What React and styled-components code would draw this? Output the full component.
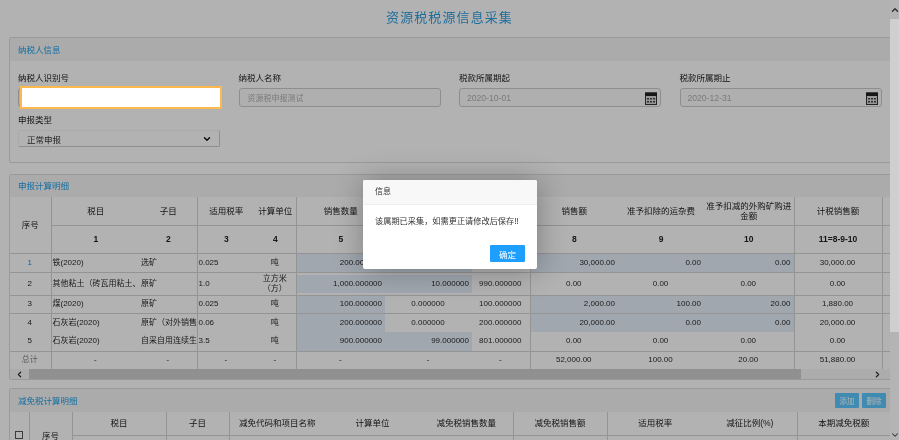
import React from 'react';
import styled, { createGlobalStyle } from 'styled-components';
import { ChevronDown, ChevronLeft, ChevronRight, ChevronUp } from 'lucide-react';

const GlobalStyle = createGlobalStyle`
  html, body {
    margin: 0;
    height: 440px;
    overflow: hidden;
    background: #fff;
    font-family: "Liberation Sans", "Noto Sans CJK SC", sans-serif;
  }
  * {
    box-sizing: border-box;
  }
`;

const mainCols = [41, 89, 57, 58, 41, 89, 87, 58, 88, 86, 90, 88, 40];
const reliefCols = [19, 43, 94, 63, 96, 95, 93, 94, 96, 94, 93];

const rows = [
  { no: '1', link: true, item: '铁(2020)', sub: '选矿', rate: '0.025', unit: '吨', h: 19, line: true,
    qty: '200.000000', cut: '0.000000', net: '200.000000', sale: '30,000.00', fee: '0.00', buy: '0.00', total: '30,000.00', cutBlue: true, saleBlue: true },
  { no: '2', item: '其他粘土（砖瓦用粘土、', sub: '原矿', rate: '1.0', unit: '立方米（方）', h: 23, line: true, inset: true,
    qty: '1,000.000000', cut: '10.000000', net: '990.000000', sale: '0.00', fee: '0.00', buy: '0.00', total: '0.00', cutBlue: true },
  { no: '3', item: '煤(2020)', sub: '原矿', rate: '0.025', unit: '吨', h: 18, line: true,
    qty: '100.000000', cut: '0.000000', net: '100.000000', sale: '2,000.00', fee: '100.00', buy: '20.00', total: '1,880.00', saleBlue: true },
  { no: '4', item: '石灰岩(2020)', sub: '原矿（对外销售）', rate: '0.06', unit: '吨', h: 19,
    qty: '200.000000', cut: '0.000000', net: '200.000000', sale: '20,000.00', fee: '0.00', buy: '0.00', total: '20,000.00', saleBlue: true },
  { no: '5', item: '石灰岩(2020)', sub: '自采自用连续生产', rate: '3.5', unit: '吨', h: 19, line: true,
    qty: '900.000000', cut: '99.000000', net: '801.000000', sale: '0.00', fee: '0.00', buy: '0.00', total: '0.00', cutBlue: true },
];

const CalendarIcon = () => (
  <CalendarSvg viewBox="0 0 12 13">
    <rect x="0.5" y="1" width="11" height="11.5" fill="#d8d8d8" stroke="#333" />
    <rect x="0" y="0.5" width="12" height="3.5" fill="#222" />
    <path d="M2 6h2v1.5H2zM5 6h2v1.5H5zM8 6h2v1.5H8zM2 9h2v1.5H2zM5 9h2v1.5H5zM8 9h2v1.5H8z" fill="#444" />
  </CalendarSvg>
);

const InfoPanel = () => (
  <Panel $gap={11}>
    <PanelHead>
      <PanelTitle>纳税人信息</PanelTitle>
    </PanelHead>
    <FormGrid>
      <Field>
        <FieldLabel>纳税人识别号</FieldLabel>
        <InputWrap>
          <TextInput readOnly value="" />
          <Highlight readOnly value="" />
        </InputWrap>
      </Field>
      <Field>
        <FieldLabel>纳税人名称</FieldLabel>
        <InputWrap>
          <TextInput readOnly value="资源税申报测试" />
        </InputWrap>
      </Field>
      <Field>
        <FieldLabel>税款所属期起</FieldLabel>
        <InputWrap>
          <TextInput $date readOnly value="2020-10-01" />
          <CalendarIcon />
        </InputWrap>
      </Field>
      <Field>
        <FieldLabel>税款所属期止</FieldLabel>
        <InputWrap>
          <TextInput $date readOnly value="2020-12-31" />
          <CalendarIcon />
        </InputWrap>
      </Field>
      <Field>
        <FieldLabel>申报类型</FieldLabel>
        <SelectBox>
          正常申报
          <ChevronDown size={10} strokeWidth={3.5} color="#111" />
        </SelectBox>
      </Field>
    </FormGrid>
  </Panel>
);

const DetailPanel = () => (
  <Panel $gap={8}>
    <PanelHead $short>
      <PanelTitle>申报计算明细</PanelTitle>
    </PanelHead>
    <TableClip>
      <DataTable $width={872}>
        <colgroup>
          {mainCols.map((w, i) => <col key={i} style={{ width: w }} />)}
        </colgroup>
        <thead>
          <tr>
            <HeadCell rowSpan={2} $right $tall>序号</HeadCell>
            <HeadCell>税目</HeadCell>
            <HeadCell $right>子目</HeadCell>
            <HeadCell>适用税率</HeadCell>
            <HeadCell $right>计算单位</HeadCell>
            <HeadCell>销售数量</HeadCell>
            <HeadCell>减除数量</HeadCell>
            <HeadCell $right>计税数量</HeadCell>
            <HeadCell>销售额</HeadCell>
            <HeadCell>准予扣除的运杂费</HeadCell>
            <HeadCell $right>准予扣减的外购矿购进金额</HeadCell>
            <HeadCell $right>计税销售额</HeadCell>
            <HeadCell />
          </tr>
          <tr>
            {['1', '2', '3', '4', '5', '6', '7', '8', '9', '10', '11=8-9-10'].map((n, i) => (
              <NumCell key={n} $right={[1, 3, 6, 9, 10].includes(i)}>{n}</NumCell>
            ))}
            <NumCell />
          </tr>
        </thead>
        <tbody>
          {rows.map((r) => (
            <BodyRow key={r.no} $h={r.h}>
              <Cell $line={r.line} $right $center $link={r.link}>{r.no}</Cell>
              <Cell $line={r.line} $left>{r.item}</Cell>
              <Cell $line={r.line} $left $right>{r.sub}</Cell>
              <Cell $line={r.line} $left>{r.rate}</Cell>
              <Cell $line={r.line} $right $center $wrap>{r.unit}</Cell>
              <Cell $line={r.line} $blue $inset={r.inset}>{r.qty}</Cell>
              <Cell $line={r.line} $blue={r.cutBlue} $inset={r.inset} $center={!r.cutBlue}>{r.cut}</Cell>
              <Cell $line={r.line} $right $center>{r.net}</Cell>
              <Cell $line={r.line} $blue={r.saleBlue} $center={!r.saleBlue}>{r.sale}</Cell>
              <Cell $line={r.line} $blue={r.saleBlue} $center={!r.saleBlue}>{r.fee}</Cell>
              <Cell $line={r.line} $right $blue={r.saleBlue} $center={!r.saleBlue}>{r.buy}</Cell>
              <Cell $line={r.line} $right $center>{r.total}</Cell>
              <Cell $line={r.line} />
            </BodyRow>
          ))}
          <BodyRow $h={18}>
            <Cell $right $center $muted>总计</Cell>
            <Cell $center>-</Cell>
            <Cell $right $center>-</Cell>
            <Cell $center>-</Cell>
            <Cell $right $center>-</Cell>
            <Cell $center>-</Cell>
            <Cell $center>-</Cell>
            <Cell $right $center>-</Cell>
            <Cell $center>52,000.00</Cell>
            <Cell $center>100.00</Cell>
            <Cell $right $center>20.00</Cell>
            <Cell $right $center>51,880.00</Cell>
            <Cell />
          </BodyRow>
        </tbody>
      </DataTable>
    </TableClip>
    <HScroll>
      <ScrollEnd><ChevronLeft size={9} strokeWidth={3.5} color="#333" /></ScrollEnd>
      <HThumb />
      <HTrack><ChevronRight size={9} strokeWidth={3.5} color="#333" /></HTrack>
    </HScroll>
  </Panel>
);

const ReliefPanel = () => (
  <Panel>
    <PanelHead>
      <PanelTitle>减免税计算明细</PanelTitle>
      <HeadButtons>
        <SmallButton>添加</SmallButton>
        <SmallButton>删除</SmallButton>
      </HeadButtons>
    </PanelHead>
    <TableClip>
      <DataTable $width={880}>
        <colgroup>
          {reliefCols.map((w, i) => <col key={i} style={{ width: w }} />)}
        </colgroup>
        <thead>
          <tr>
            <HeadCell rowSpan={2} $right $low><CheckBox /></HeadCell>
            <HeadCell rowSpan={2} $right $low>序号</HeadCell>
            <ReliefHead $right>税目</ReliefHead>
            <ReliefHead $right>子目</ReliefHead>
            <ReliefHead>减免代码和项目名称</ReliefHead>
            <ReliefHead>计算单位</ReliefHead>
            <ReliefHead $right>减免税销售数量</ReliefHead>
            <ReliefHead $right>减免税销售额</ReliefHead>
            <ReliefHead>适用税率</ReliefHead>
            <ReliefHead $right>减征比例(%)</ReliefHead>
            <ReliefHead>本期减免税额</ReliefHead>
          </tr>
          <tr>
            {reliefCols.slice(2).map((w, i) => <NumCell key={i} $right={[0, 1, 4, 5, 7].includes(i)} />)}
          </tr>
        </thead>
      </DataTable>
    </TableClip>
  </Panel>
);

const App = () => (
  <Page>
    <GlobalStyle />
    <Main>
      <PageTitle>资源税税源信息采集</PageTitle>
      <InfoPanel />
      <DetailPanel />
      <ReliefPanel />
      <Overlay />
      <Dialog>
        <DialogTitle>信息</DialogTitle>
        <DialogBody>该属期已采集，如需更正请修改后保存!!</DialogBody>
        <DialogFoot>
          <DialogButton>确定</DialogButton>
        </DialogFoot>
      </Dialog>
    </Main>
    <VScroll>
      <VButton><ChevronUp size={10} strokeWidth={3.5} color="#333" /></VButton>
      <VThumb />
      <VTrack><ChevronDown size={10} strokeWidth={2.5} color="#333" /></VTrack>
    </VScroll>
  </Page>
);

const Page = styled.div`
  display: flex;
  width: 899px;
  height: 440px;
  overflow: hidden;
  filter: blur(0.45px);
  font-size: 8.5px;
  color: #2a2a2a;
`;

const Main = styled.main`
  position: relative;
  flex: 0 0 890px;
  height: 440px;
  padding-left: 9px;
  overflow: hidden;
  background: #fff;
`;

const Overlay = styled.div`
  position: absolute;
  inset: 0;
  z-index: 10;
  background: rgba(0, 0, 0, 0.3);
`;

const PageTitle = styled.h1`
  height: 37px;
  margin: 0;
  font-size: 13px;
  line-height: 36px;
  font-weight: 400;
  letter-spacing: 1.1px;
  text-align: center;
  color: #2f9fe0;
`;

const Panel = styled.section`
  width: 900px;
  margin-bottom: ${(p) => p.$gap || 0}px;
  border: 1px solid #ddd;
  border-radius: 2px;
`;

const PanelHead = styled.header`
  display: flex;
  align-items: center;
  justify-content: space-between;
  width: 880px;
  height: ${(p) => (p.$short ? 22 : 23)}px;
  padding: 0 0 2px 8px;
  background: #f5f5f5;
`;

const PanelTitle = styled.h2`
  margin: 0;
  font-size: 8.5px;
  font-weight: 400;
  color: #1f9fe8;
`;

const FormGrid = styled.div`
  display: grid;
  grid-template-columns: repeat(4, 202px);
  column-gap: 18.5px;
  row-gap: 8px;
  padding: 12px 0 15px 8px;
`;

const Field = styled.div`
  display: flex;
  flex-direction: column;
  gap: 5px;
`;

const FieldLabel = styled.label`
  font-size: 8.5px;
  line-height: 10px;
  color: #222;
`;

const InputWrap = styled.div`
  position: relative;
  height: 19px;
`;

const TextInput = styled.input`
  display: block;
  width: 100%;
  height: 19px;
  padding: 0 ${(p) => (p.$date ? 7 : 8)}px;
  border: 1px solid #ccc;
  border-radius: 3px;
  background: #fbfbfb;
  font: ${(p) => (p.$date ? 8.6 : 8)}px "Liberation Sans", "Noto Sans CJK SC", sans-serif;
  color: #b0b0b0;
  outline: none;
`;

const Highlight = styled.input`
  position: absolute;
  top: -2px;
  left: 2px;
  z-index: 20;
  width: 202px;
  height: 23px;
  border: 2px solid #fdb94e;
  background: #fff;
  outline: none;
`;

const CalendarSvg = styled.svg`
  position: absolute;
  top: 4px;
  right: 4px;
  width: 12px;
  height: 13px;
`;

const SelectBox = styled.div`
  display: flex;
  align-items: center;
  justify-content: space-between;
  width: 202px;
  height: 17px;
  padding: 0 7px 0 8px;
  border: 1px solid #ccc;
  border-top-color: #f4f4f4;
  border-left-color: #f4f4f4;
  border-radius: 2px;
  color: #333;
`;

const TableClip = styled.div`
  width: 880px;
  overflow: hidden;
`;

const DataTable = styled.table`
  table-layout: fixed;
  width: ${(p) => p.$width}px;
  border-collapse: collapse;
`;

const HeadCell = styled.th`
  height: 28px;
  padding: 0 1px;
  border-bottom: 1px solid #d4d4d4;
  border-right: ${(p) => (p.$right ? '1px solid #d4d4d4' : 'none')};
  font-size: 8.5px;
  line-height: 10px;
  font-weight: 400;
  color: #222;
  text-align: center;
  ${(p) => p.$low && 'vertical-align: top; padding-top: 19px;'}
`;

const ReliefHead = styled(HeadCell)`
  height: 23px;
`;

const NumCell = styled.th`
  height: 28px;
  padding: 0;
  border-bottom: 1px solid #d4d4d4;
  border-right: ${(p) => (p.$right ? '1px solid #d4d4d4' : 'none')};
  font-size: 8.5px;
  font-weight: 700;
  color: #222;
`;

const BodyRow = styled.tr`
  height: ${(p) => p.$h}px;
`;

const Cell = styled.td`
  padding: 0 ${(p) => (p.$left ? 0 : 3)}px 0 ${(p) => (p.$left ? 1 : 2)}px;
  border-bottom: ${(p) => (p.$line ? '1px solid #d4d4d4' : 'none')};
  border-right: ${(p) => (p.$right ? '1px solid #d4d4d4' : 'none')};
  background: ${(p) => (p.$blue ? '#e6effb' : 'transparent')};
  ${(p) => p.$inset && 'box-shadow: inset 0 2px 0 #fff, inset 0 -2px 0 #fff;'}
  font-size: 8px;
  line-height: 10px;
  color: ${(p) => (p.$link ? '#2f86c8' : p.$muted ? '#888' : '#2a2a2a')};
  text-align: ${(p) => (p.$center ? 'center' : p.$left ? 'left' : 'right')};
  white-space: ${(p) => (p.$wrap ? 'normal' : 'nowrap')};
  overflow: hidden;
`;

const HScroll = styled.div`
  display: flex;
  width: 880px;
  height: 10px;
  background: #f6f6f6;
`;

const ScrollEnd = styled.div`
  display: flex;
  align-items: center;
  justify-content: center;
  flex: 0 0 19px;
`;

const HThumb = styled.div`
  flex: 0 0 772px;
  background: #cfcfcf;
`;

const HTrack = styled.div`
  display: flex;
  align-items: center;
  justify-content: flex-end;
  flex: 1;
  padding-right: 8px;
`;

const HeadButtons = styled.div`
  display: flex;
  gap: 3px;
  margin-top: 2px;
  padding-right: 4px;
`;

const SmallButton = styled.button`
  width: 24px;
  height: 15px;
  padding: 0;
  border: none;
  border-radius: 1px;
  background: #5bc8ff;
  font: 7.5px "Liberation Sans", "Noto Sans CJK SC", sans-serif;
  color: #fff;
`;

const CheckBox = styled.span`
  display: inline-block;
  width: 8px;
  height: 8px;
  border: 1px solid #555;
  background: #fff;
`;

const Dialog = styled.div`
  position: absolute;
  top: 180px;
  left: 363px;
  z-index: 20;
  width: 174px;
  height: 89px;
  border-radius: 2px;
  background: #fff;
  box-shadow: 1px 1px 30px rgba(0, 0, 0, 0.3);
`;

const DialogTitle = styled.div`
  height: 25px;
  padding-left: 12px;
  border-bottom: 1px solid #eee;
  border-radius: 2px 2px 0 0;
  background: #f8f8f8;
  font-size: 8px;
  line-height: 24px;
  color: #333;
`;

const DialogBody = styled.div`
  height: 40px;
  padding: 12px 0 0 12px;
  font-size: 8.2px;
  line-height: 10px;
  color: #333;
`;

const DialogFoot = styled.div`
  display: flex;
  justify-content: flex-end;
  padding-right: 12px;
`;

const DialogButton = styled.button`
  width: 35px;
  height: 17px;
  padding: 0;
  border: none;
  border-radius: 1px;
  background: #1e9fff;
  font: 8.5px "Liberation Sans", "Noto Sans CJK SC", sans-serif;
  color: #fff;
`;

const VScroll = styled.aside`
  display: flex;
  flex-direction: column;
  flex: 0 0 9px;
  background: #b4b4b4;
`;

const VButton = styled.div`
  display: flex;
  align-items: center;
  justify-content: center;
  flex: 0 0 19px;
`;

const VThumb = styled.div`
  flex: 0 0 313px;
  background: #cfcfcf;
`;

const VTrack = styled.div`
  display: flex;
  align-items: flex-end;
  justify-content: center;
  flex: 1;
`;

export default App;
